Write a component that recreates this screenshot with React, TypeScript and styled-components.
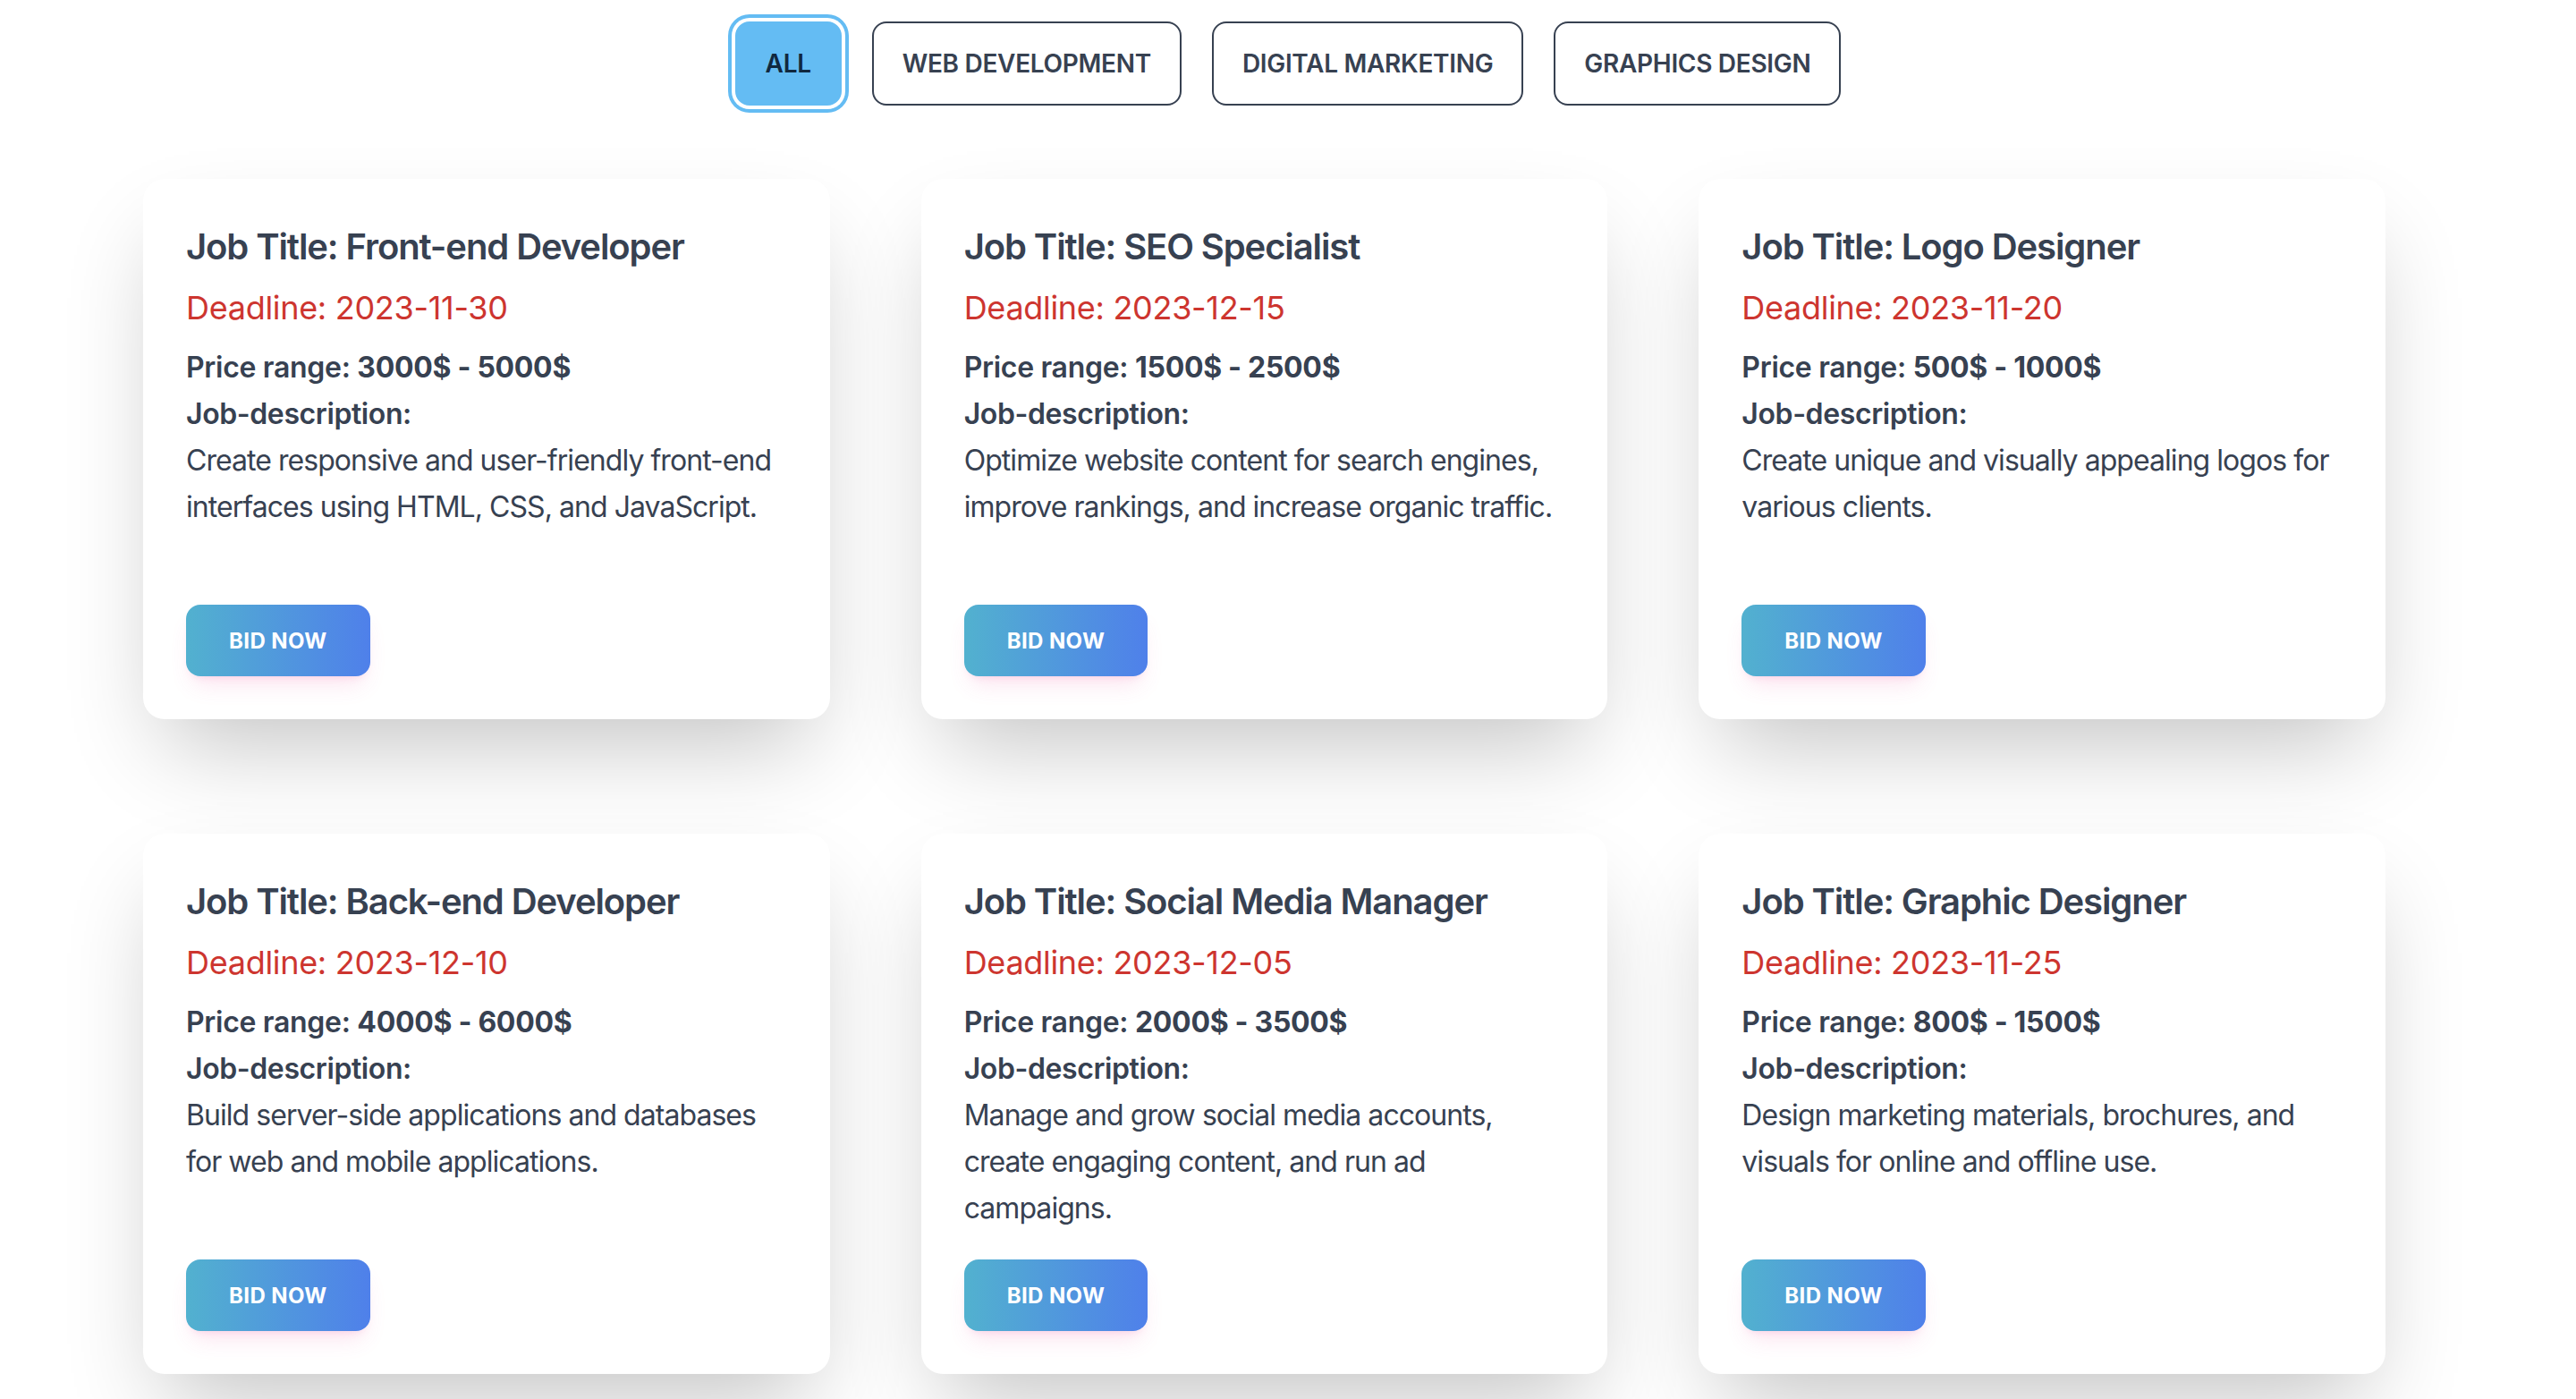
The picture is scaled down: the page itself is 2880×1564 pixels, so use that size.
import React, { useState } from "react";
import styled, { createGlobalStyle, css } from "styled-components";

const GlobalStyle = createGlobalStyle`
  html, body {
    margin: 0;
    padding: 0;
    background: #ffffff;
  }
  body {
    font-family: Inter, "Noto Sans", "Liberation Sans", sans-serif;
    color: #374151;
    -webkit-font-smoothing: antialiased;
  }
  * { box-sizing: border-box; }
`;

type Category = "all" | "web" | "marketing" | "graphics";

interface Job {
  title: string;
  deadline: string;
  price: string;
  description: string;
  category: Category;
}

const jobs: Job[] = [
  {
    title: "Front-end Developer",
    deadline: "2023-11-30",
    price: "3000$ - 5000$",
    description:
      "Create responsive and user-friendly front-end interfaces using HTML, CSS, and JavaScript.",
    category: "web",
  },
  {
    title: "SEO Specialist",
    deadline: "2023-12-15",
    price: "1500$ - 2500$",
    description:
      "Optimize website content for search engines, improve rankings, and increase organic traffic.",
    category: "marketing",
  },
  {
    title: "Logo Designer",
    deadline: "2023-11-20",
    price: "500$ - 1000$",
    description: "Create unique and visually appealing logos for various clients.",
    category: "graphics",
  },
  {
    title: "Back-end Developer",
    deadline: "2023-12-10",
    price: "4000$ - 6000$",
    description:
      "Build server-side applications and databases for web and mobile applications.",
    category: "web",
  },
  {
    title: "Social Media Manager",
    deadline: "2023-12-05",
    price: "2000$ - 3500$",
    description:
      "Manage and grow social media accounts, create engaging content, and run ad campaigns.",
    category: "marketing",
  },
  {
    title: "Graphic Designer",
    deadline: "2023-11-25",
    price: "800$ - 1500$",
    description:
      "Design marketing materials, brochures, and visuals for online and offline use.",
    category: "graphics",
  },
];

const tabs: { key: Category; label: string }[] = [
  { key: "all", label: "ALL" },
  { key: "web", label: "WEB DEVELOPMENT" },
  { key: "marketing", label: "DIGITAL MARKETING" },
  { key: "graphics", label: "GRAPHICS DESIGN" },
];

const Page = styled.div`
  padding: 24px 0 40px;
`;

const TabBar = styled.nav`
  display: flex;
  justify-content: center;
  gap: 34px;
`;

const Tab = styled.button<{ $active: boolean }>`
  height: 94px;
  padding: 0 32px;
  border: 2px solid #374151;
  border-radius: 16px;
  background: #ffffff;
  color: #374151;
  font-family: Inter, "Noto Sans", sans-serif;
  font-size: 28px;
  font-weight: 600;
  letter-spacing: -0.3px;
  cursor: pointer;
  ${(p) =>
    p.$active &&
    css`
      background: #64bcf3;
      border-color: #64bcf3;
      color: #10283f;
      box-shadow: 0 0 0 4px #ffffff, 0 0 0 8px #64bcf3;
    `}
`;

const Grid = styled.section`
  display: grid;
  grid-template-columns: repeat(3, 1fr);
  column-gap: 102px;
  row-gap: 128px;
  padding: 0 213px 0 160px;
  margin-top: 82px;
`;

const Card = styled.article`
  display: flex;
  flex-direction: column;
  align-items: flex-start;
  padding: 48px;
  background: #ffffff;
  border-radius: 24px;
  box-shadow: 0 50px 100px -24px rgba(0, 0, 0, 0.24),
    0 0 2px rgba(0, 0, 0, 0.012);
`;

const Title = styled.h2`
  margin: 0;
  font-size: 40px;
  line-height: 56px;
  font-weight: 600;
  color: #374151;
  letter-spacing: -1.1px;
`;

const Deadline = styled.p`
  margin: 12px 0 0;
  font-size: 36px;
  line-height: 56px;
  font-weight: 400;
  color: #cd352f;
  letter-spacing: -0.3px;
`;

const Price = styled.p`
  margin: 13px 0 0;
  font-size: 32px;
  line-height: 52px;
  font-weight: 600;
  color: #374151;
  letter-spacing: -0.3px;
`;

const Amount = styled.span`
  font-weight: 700;
`;

const Label = styled.p`
  margin: 0;
  font-size: 32px;
  line-height: 52px;
  font-weight: 600;
  color: #374151;
  letter-spacing: -0.4px;
`;

const Description = styled.p`
  margin: 0;
  min-height: 156px;
  font-size: 32px;
  line-height: 52px;
  font-weight: 400;
  color: #374151;
  letter-spacing: -0.95px;
`;

const BidButton = styled.button`
  margin-top: auto;
  height: 80px;
  padding: 0 48px;
  border: none;
  border-radius: 16px;
  background: linear-gradient(to right, #52b1cf, #4f80ea);
  color: #ffffff;
  font-family: Inter, "Noto Sans", sans-serif;
  font-size: 24px;
  font-weight: 700;
  letter-spacing: 0.4px;
  cursor: pointer;
  box-shadow: 0 16px 26px -8px rgba(236, 72, 153, 0.16),
    0 6px 10px -6px rgba(236, 72, 153, 0.18);
`;

const Spacer = styled.div`
  height: 31px;
  flex-shrink: 0;
`;

export default function App() {
  const [active, setActive] = useState<Category>("all");
  const visible = jobs.filter((j) => active === "all" || j.category === active);

  return (
    <Page>
      <GlobalStyle />
      <TabBar>
        {tabs.map((t) => (
          <Tab key={t.key} $active={active === t.key} onClick={() => setActive(t.key)}>
            {t.label}
          </Tab>
        ))}
      </TabBar>
      <Grid>
        {visible.map((job) => (
          <Card key={job.title}>
            <Title>Job Title: {job.title}</Title>
            <Deadline>Deadline: {job.deadline}</Deadline>
            <Price>
              Price range: <Amount>{job.price}</Amount>
            </Price>
            <Label>Job-description:</Label>
            <Description>{job.description}</Description>
            <Spacer />
            <BidButton>BID NOW</BidButton>
          </Card>
        ))}
      </Grid>
    </Page>
  );
}
